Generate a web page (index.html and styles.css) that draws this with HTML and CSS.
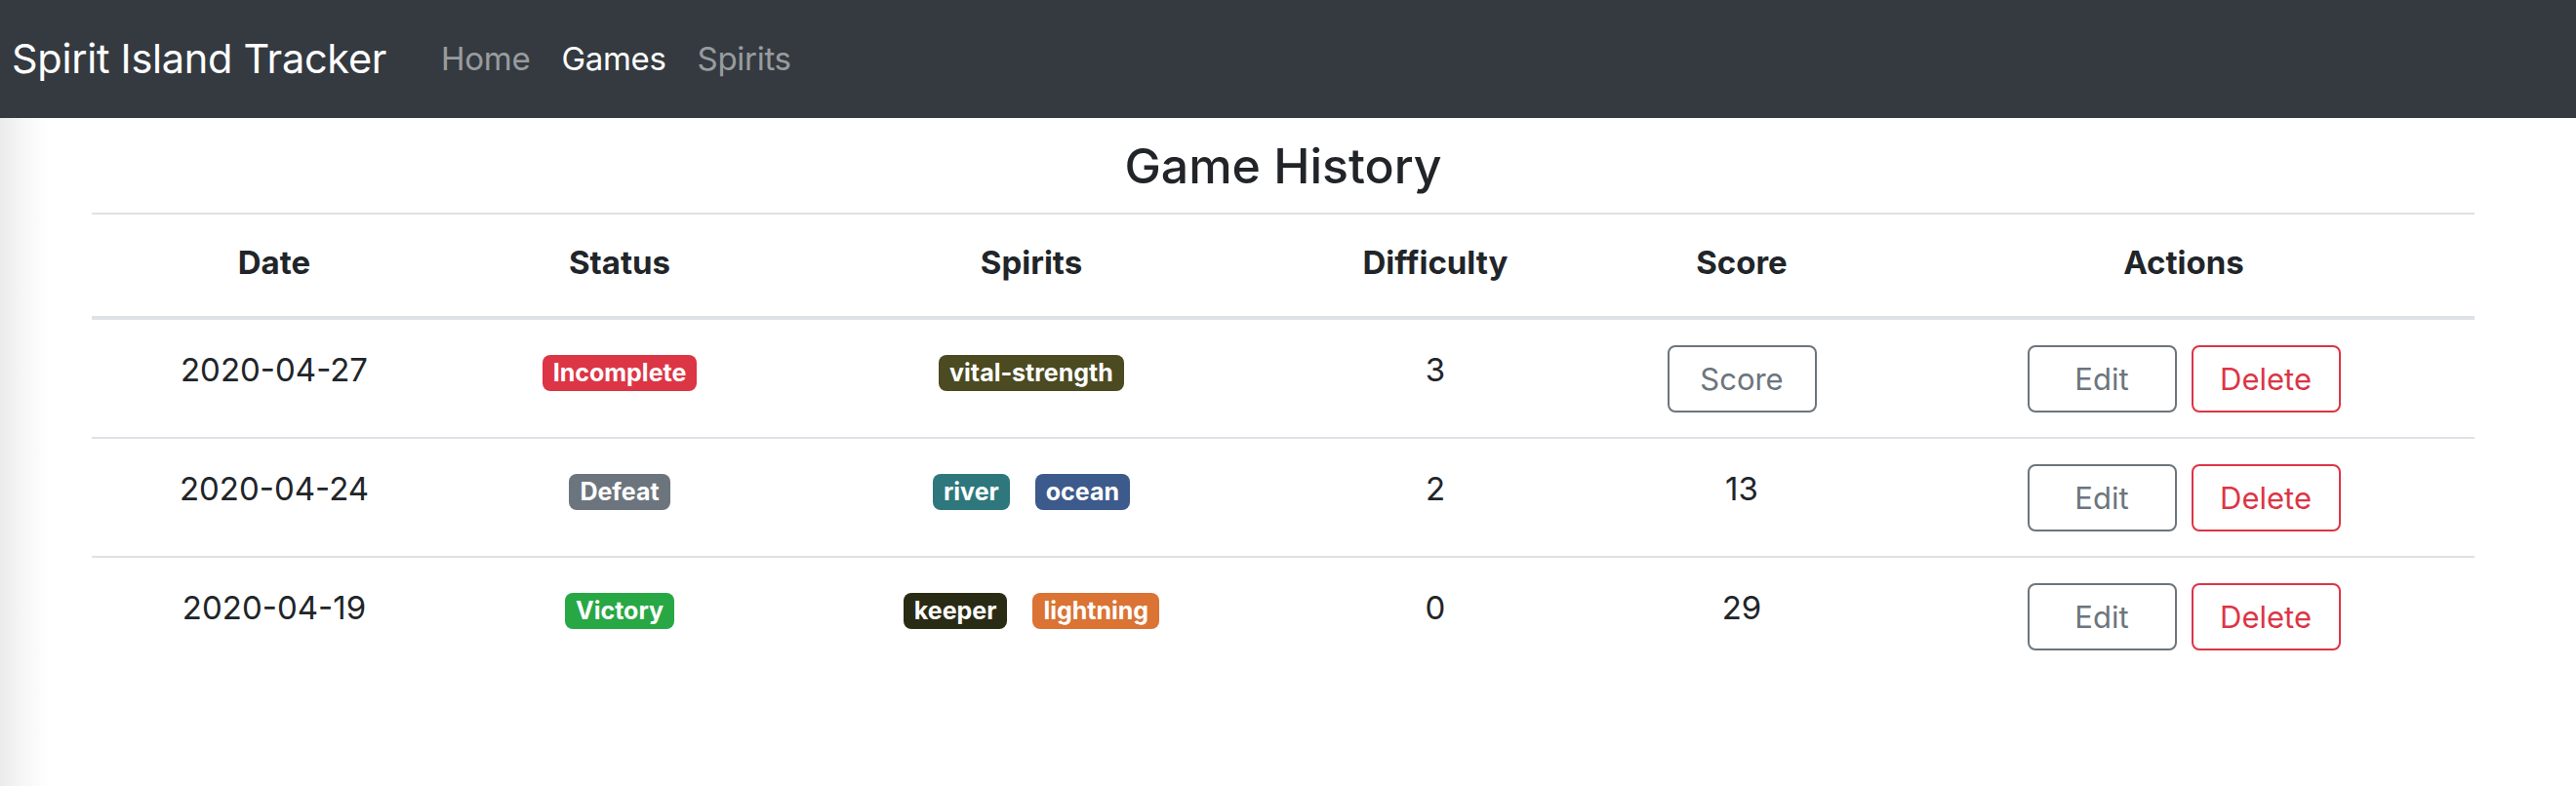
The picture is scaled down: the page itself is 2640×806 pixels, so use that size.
FILE: index.html
```html
<!DOCTYPE html>
<html lang="en">
<head>
<meta charset="utf-8">
<title>Spirit Island Tracker</title>
<link rel="stylesheet" href="styles.css">
</head>
<body>
<nav class="navbar">
  <a class="brand" href="#">Spirit Island Tracker</a>
  <ul class="nav">
    <li><a class="nav-link" href="#">Home</a></li>
    <li><a class="nav-link active" href="#">Games</a></li>
    <li><a class="nav-link" href="#">Spirits</a></li>
  </ul>
</nav>
<main class="container">
  <h2 class="title">Game History</h2>
  <table class="games">
    <colgroup>
      <col class="c-date"><col class="c-status"><col class="c-spirits"><col class="c-diff"><col class="c-score"><col class="c-actions">
    </colgroup>
    <thead>
      <tr><th>Date</th><th>Status</th><th>Spirits</th><th>Difficulty</th><th>Score</th><th>Actions</th></tr>
    </thead>
    <tbody>
      <tr>
        <td>2020-04-27</td>
        <td><span class="badge b-incomplete">Incomplete</span></td>
        <td><div class="spirits"><span class="badge s-vital">vital-strength</span></div></td>
        <td>3</td>
        <td><button class="btn btn-grey">Score</button></td>
        <td><div class="actions"><button class="btn btn-grey">Edit</button><button class="btn btn-red">Delete</button></div></td>
      </tr>
      <tr>
        <td>2020-04-24</td>
        <td><span class="badge b-defeat">Defeat</span></td>
        <td><div class="spirits"><span class="badge s-river">river</span><span class="badge s-ocean">ocean</span></div></td>
        <td>2</td>
        <td>13</td>
        <td><div class="actions"><button class="btn btn-grey">Edit</button><button class="btn btn-red">Delete</button></div></td>
      </tr>
      <tr>
        <td>2020-04-19</td>
        <td><span class="badge b-victory">Victory</span></td>
        <td><div class="spirits"><span class="badge s-keeper">keeper</span><span class="badge s-lightning">lightning</span></div></td>
        <td>0</td>
        <td>29</td>
        <td><div class="actions"><button class="btn btn-grey">Edit</button><button class="btn btn-red">Delete</button></div></td>
      </tr>
    </tbody>
  </table>
</main>
</body>
</html>
```
FILE: styles.css
```css
html, body {
  margin: 0;
  padding: 0;
}
body {
  font-family: Inter, "Liberation Sans", sans-serif;
  font-size: 33px;
  line-height: 1.5;
  color: #212529;
  background: linear-gradient(to right, #ebebeb 0, #f7f7f7 25px, #ffffff 52px);
  min-height: 806px;
}
.navbar {
  display: flex;
  align-items: center;
  height: 121px;
  padding: 0 12px;
  background: #343a40;
  box-sizing: border-box;
}
.brand {
  font-size: 41.5px;
  color: #ffffff;
  text-decoration: none;
  margin-right: 40px;
  line-height: 1.2;
  letter-spacing: -0.3px;
}
.nav {
  display: flex;
  list-style: none;
  margin: 0;
  padding: 0;
}
.nav-link {
  display: block;
  padding: 0 16px;
  font-size: 33px;
  color: rgba(255, 255, 255, 0.5);
  text-decoration: none;
  letter-spacing: -0.3px;
}
.nav-link.active {
  color: #ffffff;
}
.container {
  margin-left: 94px;
  width: 2442px;
}
.title {
  margin: 0;
  padding: 19px 0 18px;
  font-size: 50px;
  font-weight: 500;
  line-height: 1.2;
  text-align: center;
}
.games {
  width: 2442px;
  table-layout: fixed;
  border-collapse: collapse;
}
.c-date { width: 374px; }
.c-status { width: 334px; }
.c-spirits { width: 510px; }
.c-diff { width: 318px; }
.c-score { width: 310px; }
.c-actions { width: 596px; }
.games th, .games td {
  text-align: center;
  padding: 27px 24px 25px;
  vertical-align: top;
}
.games th {
  font-weight: 700;
  border-top: 2px solid #dee2e6;
  border-bottom: 4px solid #dee2e6;
  padding: 25px 24px 29px;
}
.games td {
  border-top: 2px solid #dee2e6;
}
.games tbody tr:first-child td {
  border-top: 0;
}
.badge {
  display: inline-block;
  padding: 6px 11px;
  font-size: 25px;
  font-weight: 700;
  line-height: 1;
  color: #ffffff;
  border-radius: 8px;
  white-space: nowrap;
}
.b-incomplete { background: #dc3545; }
.b-defeat { background: #6c757d; }
.b-victory { background: #28a745; }
.s-vital { background: #4b4a21; }
.s-river { background: #2d777d; }
.s-ocean { background: #3d5a8c; }
.s-keeper { background: #2a2b14; }
.s-lightning { background: #da7333; }
.spirits {
  display: flex;
  justify-content: center;
  gap: 26px;
  padding-top: 9px;
}
.actions {
  display: flex;
  justify-content: center;
  gap: 15px;
  margin-top: -1px;
}
.btn {
  width: 153px;
  height: 69px;
  box-sizing: border-box;
  font-family: Inter, "Liberation Sans", sans-serif;
  font-size: 31px;
  background: #ffffff;
  border: 2px solid;
  border-radius: 8px;
  padding: 0;
  line-height: 1;
  margin-top: -1px;
}
.actions .btn {
  margin-top: 0;
}
.btn-grey {
  color: #6c757d;
  border-color: #6c757d;
}
.btn-red {
  color: #dc3545;
  border-color: #dc3545;
}
```
